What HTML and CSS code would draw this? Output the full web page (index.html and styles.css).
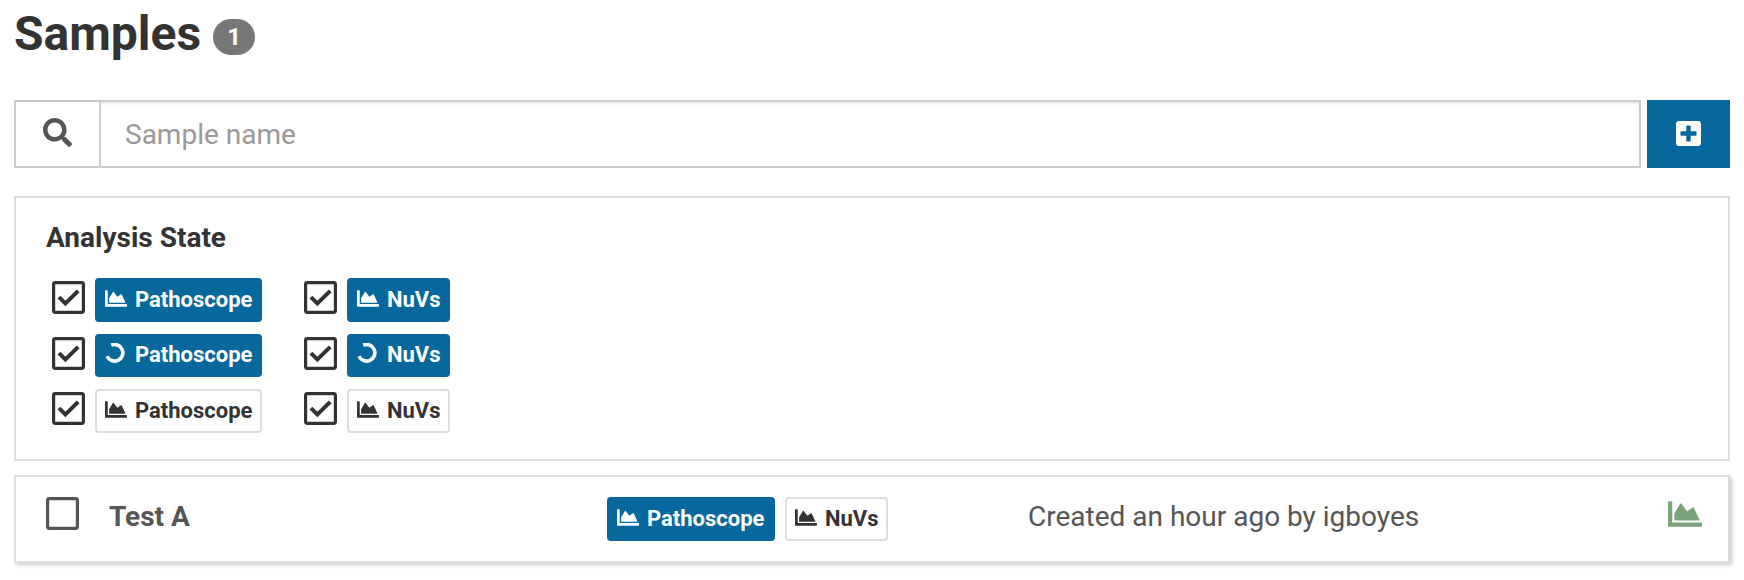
FILE: index.html
```html
<!DOCTYPE html>
<html lang="en">
<head>
<meta charset="utf-8">
<title>Samples</title>
<link rel="stylesheet" href="styles.css">
</head>
<body>
<svg class="sprite" aria-hidden="true">
  <symbol id="chart" viewBox="0 64 512 384"><path d="M500 384c6.600 0 12 5.400 12 12v40c0 6.600-5.400 12-12 12H12c-6.600 0-12-5.400-12-12V76c0-6.600 5.400-12 12-12h40c6.600 0 12 5.400 12 12v308h436zM372.700 159.500L288 216l-85.300-113.700c-5.100-6.800-15.500-6.300-19.900 1L96 248v104h384l-89.900-187.800c-3.200-6.500-11.400-8.700-17.400-4.700z"/></symbol>
  <symbol id="box" viewBox="0 0 33 33"><rect x="1.600" y="1.600" width="29.800" height="29.800" rx="1.800" fill="none" stroke="currentColor" stroke-width="3.200"/></symbol>
  <symbol id="checked" viewBox="0 0 33 33"><rect x="1.600" y="1.600" width="29.800" height="29.800" rx="1.800" fill="none" stroke="currentColor" stroke-width="3.200"/><path d="M6.900 16.100l6.500 6.400L26.200 9.800" fill="none" stroke="currentColor" stroke-width="4"/></symbol>
  <symbol id="spinner" viewBox="0 0 20 20"><path d="M6.200 2.200A8.300 8.300 0 1 1 2 13.200" fill="none" stroke="currentColor" stroke-width="3.600"/></symbol>
</svg>
<main class="page">
  <h1 class="title">Samples <span class="badge">1</span></h1>

  <div class="toolbar">
    <div class="search">
      <span class="addon"><svg class="search-icon" viewBox="0 0 512 512"><path d="M505 442.700L405.300 343c-4.500-4.500-10.600-7-17-7H372c27.600-35.300 44-79.700 44-128C416 93.100 322.900 0 208 0S0 93.100 0 208s93.100 208 208 208c48.300 0 92.700-16.400 128-44v16.300c0 6.400 2.500 12.500 7 17l99.700 99.700c9.400 9.400 24.600 9.400 33.900 0l28.300-28.300c9.400-9.400 9.400-24.600.1-34zM208 336c-70.700 0-128-57.200-128-128 0-70.700 57.200-128 128-128 70.700 0 128 57.200 128 128 0 70.700-57.200 128-128 128z"/></svg></span>
      <input class="field" type="text" placeholder="Sample name">
    </div>
    <button class="create" aria-label="Create"><svg class="plus-icon" viewBox="0 32 448 448"><path d="M400 32H48C21.500 32 0 53.500 0 80v352c0 26.500 21.500 48 48 48h352c26.500 0 48-21.500 48-48V80c0-26.500-21.500-48-48-48zm-32 252c0 6.600-5.400 12-12 12h-92v92c0 6.600-5.400 12-12 12h-56c-6.600 0-12-5.400-12-12v-92H92c-6.600 0-12-5.400-12-12v-56c0-6.600 5.400-12 12-12h92v-92c0-6.600 5.400-12 12-12h56c6.600 0 12 5.400 12 12v92h92c6.600 0 12 5.400 12 12v56z"/></svg></button>
  </div>

  <section class="panel">
    <h2 class="panel-title">Analysis State</h2>
    <div class="filters">
      <div class="filter"><svg class="check"><use href="#checked"/></svg><span class="label primary patho"><svg class="chart"><use href="#chart"/></svg>Pathoscope</span></div>
      <div class="filter"><svg class="check"><use href="#checked"/></svg><span class="label primary nuvs"><svg class="chart"><use href="#chart"/></svg>NuVs</span></div>
      <div class="filter running"><svg class="check"><use href="#checked"/></svg><span class="label primary patho"><svg class="spinner"><use href="#spinner"/></svg>Pathoscope</span></div>
      <div class="filter running"><svg class="check"><use href="#checked"/></svg><span class="label primary nuvs"><svg class="spinner"><use href="#spinner"/></svg>NuVs</span></div>
      <div class="filter"><svg class="check"><use href="#checked"/></svg><span class="label plain patho"><svg class="chart"><use href="#chart"/></svg>Pathoscope</span></div>
      <div class="filter"><svg class="check"><use href="#checked"/></svg><span class="label plain nuvs"><svg class="chart"><use href="#chart"/></svg>NuVs</span></div>
    </div>
  </section>

  <article class="sample">
    <svg class="check"><use href="#box"/></svg>
    <strong class="name">Test A</strong>
    <div class="labels">
      <span class="label primary patho"><svg class="chart"><use href="#chart"/></svg>Pathoscope</span>
      <span class="label plain nuvs"><svg class="chart"><use href="#chart"/></svg>NuVs</span>
    </div>
    <span class="created">Created an hour ago by igboyes</span>
    <svg class="analyze"><use href="#chart"/></svg>
  </article>
</main>
</body>
</html>
```

FILE: styles.css
```css
* { box-sizing: border-box; }

body {
  margin: 0;
  background: #fff;
  color: #333;
  font-family: Roboto, "Liberation Sans", sans-serif;
  font-size: 28px;
  line-height: 40px;
}

svg { display: block; flex: none; fill: currentColor; }
.sprite { position: absolute; width: 0; height: 0; }

.page { padding: 6px 14px 17px; }

.title {
  display: flex;
  align-items: center;
  gap: 12px;
  height: 56px;
  margin: 0 0 38px;
  font-size: 48px;
  line-height: 56px;
  font-weight: 700;
}

.badge {
  width: 42px;
  height: 36px;
  margin-top: 6px;
  border-radius: 20px;
  background: #777;
  color: #fff;
  font-size: 24px;
  line-height: 36px;
  text-align: center;
}

.toolbar { display: flex; gap: 6px; height: 68px; margin-bottom: 28px; }
.search { display: flex; flex: 1; }

.addon {
  width: 85px;
  border: 2px solid #ccc;
  border-right: 0;
  padding: 16px 0 0 27px;
  color: #555;
}
.search-icon { width: 29px; height: 29px; }

.field {
  flex: 1;
  min-width: 0;
  padding: 2px 24px 0;
  border: 2px solid #ccc;
  border-radius: 0;
  outline: 0;
  box-shadow: inset 0 2px 2px rgba(0, 0, 0, .075);
  font: inherit;
  color: #555;
}
.field::placeholder { color: #999; opacity: 1; }

.create {
  display: flex;
  align-items: center;
  justify-content: center;
  width: 83px;
  padding: 0 0 1px;
  border: 0;
  background: #07689d;
  color: #fff;
}
.plus-icon { width: 25px; height: 25px; }

.panel {
  height: 265px;
  margin-bottom: 14px;
  padding: 20px 30px;
  border: 2px solid #ddd;
}
.panel-title { margin: 0 0 20px; font-size: 28px; line-height: 40px; font-weight: 700; }

.filters {
  display: grid;
  grid-template-columns: 210px 146px;
  grid-template-rows: 44px 43px 44px;
  column-gap: 42px;
  row-gap: 12px;
  padding-left: 6px;
}
.filter { display: flex; gap: 10px; }

.check { width: 33px; height: 33px; margin-top: 2.5px; }

.label {
  display: flex;
  align-items: center;
  gap: 8px;
  height: 44px;
  padding-left: 10px;
  border-radius: 4px;
  font-size: 22px;
  font-weight: 700;
  white-space: nowrap;
}
.running .label { height: 43px; padding-bottom: 1px; }
.patho { width: 167px; }
.nuvs { width: 103px; }
.primary { background: #07689d; color: #fff; }
.plain { padding-left: 8px; border: 2px solid #ddd; color: #333; }

.chart { width: 22px; height: 17px; margin-bottom: 3px; }
.spinner { width: 20px; height: 20px; margin: 0 2px 5px 0; }

.sample {
  display: grid;
  grid-template-columns: 63px 498px 421px 1fr 34px;
  height: 88px;
  padding: 20px 26px 0 30px;
  border: 2px solid #ddd;
  box-shadow: 2px 2px 4px rgba(0, 0, 0, .2);
  color: #555;
}
.sample .check { margin-top: 0; }
.labels { display: flex; gap: 10px; }
.sample .patho { width: 168px; }
.name, .created { line-height: 40px; }
.analyze { width: 34px; height: 26px; margin-top: 4px; color: #7aa37a; }
```
